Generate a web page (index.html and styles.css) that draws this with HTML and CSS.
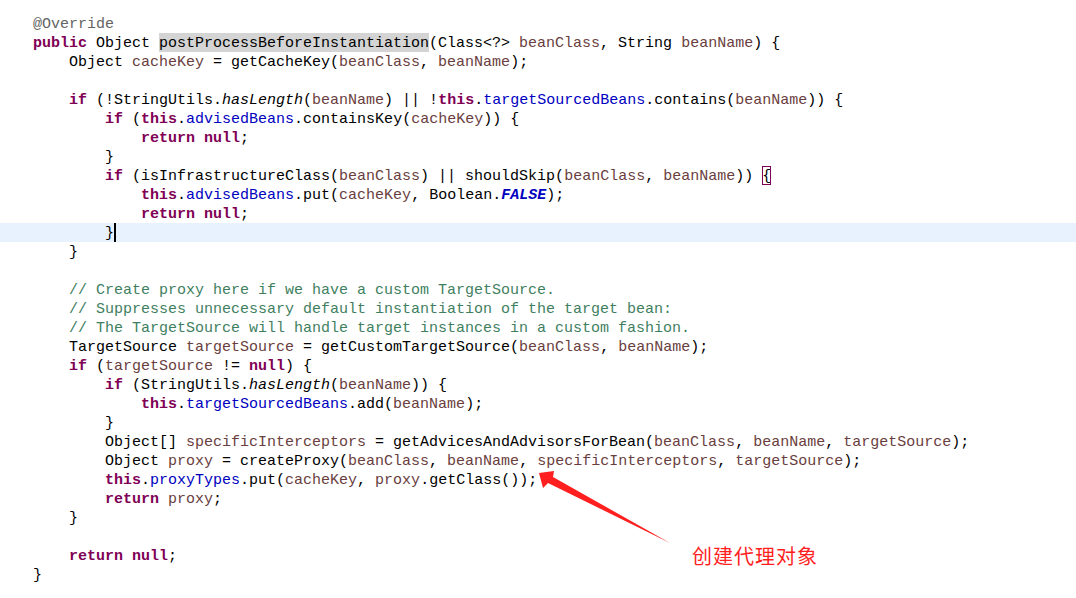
FILE: index.html
```html
<!DOCTYPE html>
<html lang="zh">

<head>
  <meta charset="UTF-8">
  <meta name="viewport" content="width=device-width, initial-scale=1.0">
  <title>AbstractAutoProxyCreator</title>
  <link rel="stylesheet" href="styles.css">
</head>

<body>
  <div class="editor">
    <!-- 源码 -->
    <div class="line"><span class="a">@Override</span></div>
    <div class="line"><span class="k">public</span> Object <span class="sel">postProcessBeforeInstantiation</span>(Class&lt;?&gt; <span class="v">beanClass</span>, String <span class="v">beanName</span>) {</div>
    <div class="line">    Object <span class="v">cacheKey</span> = getCacheKey(<span class="v">beanClass</span>, <span class="v">beanName</span>);</div>
    <div class="line"></div>
    <div class="line">    <span class="k">if</span> (!StringUtils.<span class="s">hasLength</span>(<span class="v">beanName</span>) || !<span class="k">this</span>.<span class="f">targetSourcedBeans</span>.contains(<span class="v">beanName</span>)) {</div>
    <div class="line">        <span class="k">if</span> (<span class="k">this</span>.<span class="f">advisedBeans</span>.containsKey(<span class="v">cacheKey</span>)) {</div>
    <div class="line">            <span class="k">return</span> <span class="k">null</span>;</div>
    <div class="line">        }</div>
    <div class="line">        <span class="k">if</span> (isInfrastructureClass(<span class="v">beanClass</span>) || shouldSkip(<span class="v">beanClass</span>, <span class="v">beanName</span>)) <span class="match">{</span></div>
    <div class="line">            <span class="k">this</span>.<span class="f">advisedBeans</span>.put(<span class="v">cacheKey</span>, Boolean.<span class="cf">FALSE</span>);</div>
    <div class="line">            <span class="k">return</span> <span class="k">null</span>;</div>
    <div class="line current">        }<span class="caret"></span></div>
    <div class="line">    }</div>
    <div class="line"></div>
    <div class="line">    <span class="c">// Create proxy here if we have a custom TargetSource.</span></div>
    <div class="line">    <span class="c">// Suppresses unnecessary default instantiation of the target bean:</span></div>
    <div class="line">    <span class="c">// The TargetSource will handle target instances in a custom fashion.</span></div>
    <div class="line">    TargetSource <span class="v">targetSource</span> = getCustomTargetSource(<span class="v">beanClass</span>, <span class="v">beanName</span>);</div>
    <div class="line">    <span class="k">if</span> (<span class="v">targetSource</span> != <span class="k">null</span>) {</div>
    <div class="line">        <span class="k">if</span> (StringUtils.<span class="s">hasLength</span>(<span class="v">beanName</span>)) {</div>
    <div class="line">            <span class="k">this</span>.<span class="f">targetSourcedBeans</span>.add(<span class="v">beanName</span>);</div>
    <div class="line">        }</div>
    <div class="line">        Object[] <span class="v">specificInterceptors</span> = getAdvicesAndAdvisorsForBean(<span class="v">beanClass</span>, <span class="v">beanName</span>, <span class="v">targetSource</span>);</div>
    <div class="line">        Object <span class="v">proxy</span> = createProxy(<span class="v">beanClass</span>, <span class="v">beanName</span>, <span class="v">specificInterceptors</span>, <span class="v">targetSource</span>);</div>
    <div class="line">        <span class="k">this</span>.<span class="f">proxyTypes</span>.put(<span class="v">cacheKey</span>, <span class="v">proxy</span>.getClass());</div>
    <div class="line">        <span class="k">return</span> <span class="v">proxy</span>;</div>
    <div class="line">    }</div>
    <div class="line"></div>
    <div class="line">    <span class="k">return</span> <span class="k">null</span>;</div>
    <div class="line">}</div>

    <!-- 标注 -->
    <svg class="arrow" width="1076" height="598" viewBox="0 0 1076 598">
      <polygon points="539,473 554,471 553,477 670,543 548,483 543,488" fill="#ff1f1f" />
    </svg>
    <div class="note">创建代理对象</div>
  </div>
</body>

</html>
```

FILE: styles.css
```css
:root {
  --keyword: #7F0055;
  --field: #0000C0;
  --local: #6A3E3E;
  --comment: #3F7F5F;
  --annotation: #646464;
  --current-line: #E8F2FE;
  --selection: #D4D4D4;
  --note: #ff1f1f;
}

body {
  margin: 0;
  background: #fff;
}

.editor {
  position: relative;
  width: 1076px;
  height: 598px;
  padding-top: 14px;
  box-sizing: border-box;
  font-family: 'Liberation Mono', 'DejaVu Sans Mono', monospace;
  font-size: 15px;
  color: #000;
  overflow: hidden;
}

.line {
  height: 19px;
  line-height: 22px;
  padding-left: 33px;
  white-space: pre;
}

.line.current {
  background: var(--current-line);
}

.k {
  color: var(--keyword);
  font-weight: bold;
}

.f {
  color: var(--field);
}

.v {
  color: var(--local);
}

.c {
  color: var(--comment);
}

.a {
  color: var(--annotation);
}

.s {
  font-style: italic;
}

.cf {
  color: var(--field);
  font-weight: bold;
  font-style: italic;
}

.sel {
  background: var(--selection);
  display: inline-block;
  height: 19px;
}

.match {
  display: inline-block;
  height: 19px;
  box-sizing: border-box;
  outline: 1px solid var(--keyword);
  outline-offset: -1px;
}

.caret {
  display: inline-block;
  width: 2px;
  height: 19px;
  vertical-align: top;
  background: #000;
}

.arrow {
  position: absolute;
  left: 0;
  top: 0;
  pointer-events: none;
}

.note {
  position: absolute;
  left: 692px;
  top: 545px;
  font-family: 'Noto Sans CJK SC', sans-serif;
  font-size: 20px;
  line-height: 22px;
  letter-spacing: 1px;
  color: var(--note);
}
```
